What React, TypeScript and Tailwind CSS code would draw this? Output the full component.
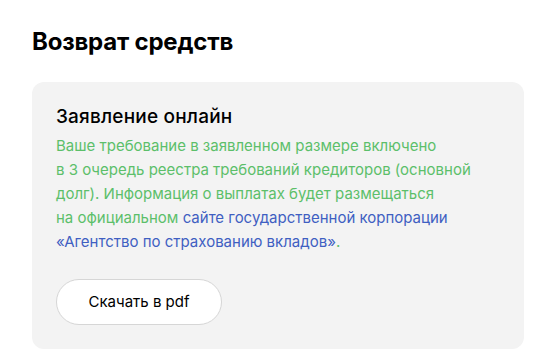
export default function App() {
  return (
    <div className="w-[542px] h-[359px] bg-white pl-8 pr-[18px] pt-[28px]" style={{ fontFamily: "Inter, 'Noto Sans', sans-serif" }}>
      <h1 className="text-[24px] leading-[28px] font-bold text-black tracking-[-0.2px]">Возврат средств</h1>
      <div className="mt-[26px] rounded-[12px] bg-[#f3f3f3] pl-6 pr-6 pt-[22px] pb-6">
        <h2 className="text-[19px] leading-[26px] font-medium tracking-[0.2px] text-black">Заявление онлайн</h2>
        <p className="mt-1 text-[15px] leading-[24px] text-[#5cbf6a]">
          Ваше требование в заявленном размере включено<br />
          в 3 очередь реестра требований кредиторов (основной<br />
          долг). Информация о выплатах будет размещаться<br />
          на официальном <span className="text-[#3f5fc2]">сайте государственной корпорации<br />
          «Агентство по страхованию вкладов»</span>.
        </p>
        <button className="mt-[25px] h-[46px] w-[166px] rounded-full border border-[#d6d6d6] bg-white text-[15px] text-black">
          Скачать в pdf
        </button>
      </div>
    </div>
  );
}
